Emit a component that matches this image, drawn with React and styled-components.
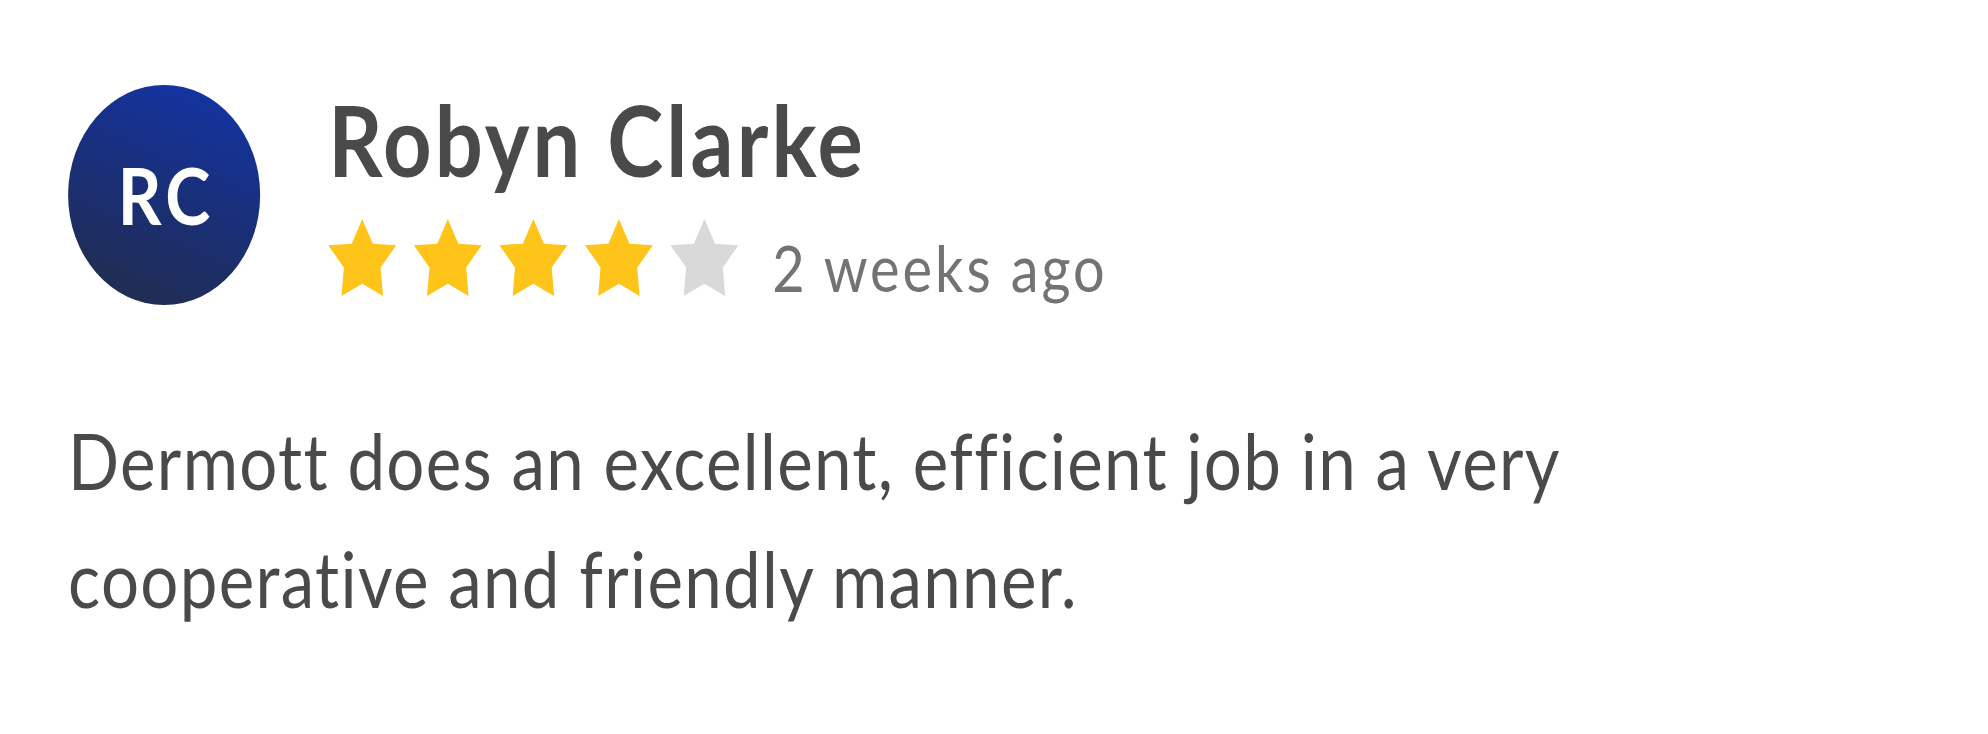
import React from 'react';
import styled, { createGlobalStyle } from 'styled-components';

const GlobalStyle = createGlobalStyle`
  html, body {
    margin: 0;
    padding: 0;
    background: #ffffff;
    overflow: hidden;
  }
  body {
    font-family: Lato, "Liberation Sans", sans-serif;
  }
`;

const review = {
  initials: 'RC',
  name: 'Robyn Clarke',
  rating: 4,
  when: '2 weeks ago',
  text: 'Dermott does an excellent, efficient job in a very cooperative and friendly manner.'
};

// star drawn in a 100x100 box, stretched to the star's size
const STAR = '50,0 65.5,32 100,34 77,63 80.5,100 50,84 19.5,100 23,63 0,34 34.5,32';

const Star = ({ $on }) => (
  <StarSvg viewBox="0 0 100 100" preserveAspectRatio="none" $on={$on}>
    <polygon points={STAR} />
  </StarSvg>
);

const Review = () => (
  <Card>
    <Header>
      <Avatar>{review.initials}</Avatar>
      <Info>
        <Name>{review.name}</Name>
        <Meta>
          <Stars>
            {[1, 2, 3, 4, 5].map((i) => (
              <Star key={i} $on={i <= review.rating} />
            ))}
          </Stars>
          <When>{review.when}</When>
        </Meta>
      </Info>
    </Header>
    <Body>{review.text}</Body>
  </Card>
);

export default function App() {
  return (
    <>
      <GlobalStyle />
      <Review />
    </>
  );
}

const Card = styled.div`
  width: 2250px;
  padding: 85px 0 0 78px;
  box-sizing: border-box;
  transform: scaleX(0.873);
  transform-origin: 0 0;
`;

const Header = styled.div`
  display: flex;
  align-items: flex-start;
  gap: 78px;
`;

const Avatar = styled.div`
  width: 220px;
  height: 220px;
  flex-shrink: 0;
  border-radius: 50%;
  background: linear-gradient(200deg, #1235aa 0%, #1a2f78 50%, #222c48 100%);
  color: #ffffff;
  display: flex;
  align-items: center;
  justify-content: center;
  padding-left: 5px;
  box-sizing: border-box;
  font-size: 78px;
  font-weight: 700;
  letter-spacing: 5px;
`;

const Info = styled.div`
  display: flex;
  flex-direction: column;
  margin-top: 6px;
`;

const Name = styled.div`
  font-size: 97px;
  line-height: 97px;
  font-weight: 700;
  letter-spacing: 3.6px;
  color: #4a4a4a;
`;

const Meta = styled.div`
  display: flex;
  align-items: flex-start;
  margin-top: 31px;
`;

const Stars = styled.div`
  display: flex;
  gap: 20px;
`;

const StarSvg = styled.svg`
  width: 77.9px;
  height: 77px;
  display: block;
  fill: ${(p) => (p.$on ? '#ffc419' : '#d9d9d9')};
`;

const When = styled.span`
  margin: 17px 0 0 39px;
  font-size: 64px;
  line-height: 64px;
  letter-spacing: 3.4px;
  color: #737373;
`;

const Body = styled.p`
  margin: 96px 0 0;
  max-width: 1800px;
  font-size: 77px;
  line-height: 118px;
  letter-spacing: 1.5px;
  color: #4a4a4a;
`;
